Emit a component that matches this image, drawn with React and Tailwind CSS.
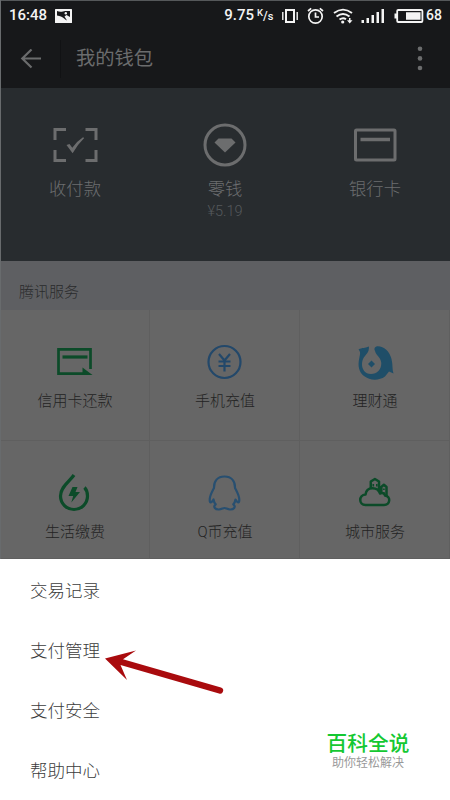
const wallet = [
  { label: "收付款", Icon: ScanIcon },
  { label: "零钱", Icon: ChangeIcon, note: "¥5.19" },
  { label: "银行卡", Icon: BankCardIcon },
];

const services = [
  { label: "信用卡还款", Icon: RepayIcon },
  { label: "手机充值", Icon: YuanIcon },
  { label: "理财通", Icon: FundIcon },
  { label: "生活缴费", Icon: UtilityIcon },
  { label: "Q币充值", Icon: PenguinIcon },
  { label: "城市服务", Icon: CityIcon },
];

const menu = ["交易记录", "支付管理", "支付安全", "帮助中心"];

function ScanIcon() {
  return (
    <svg width="46" height="46" viewBox="0 0 46 46" fill="none" stroke="#6c6d6e" strokeWidth="3">
      <path d="M3 18V7.500H14M33.500 7.500H44V18M44 28V38.500H33.500M14 38.500H3V28" />
      <path d="M14.500 23 17.500 22 20.300 25.800Q25 19 31 15.200L32.200 16Q26 22 20.600 31.200Z" fill="#6c6d6e" stroke="none" />
    </svg>
  );
}

function ChangeIcon() {
  return (
    <svg width="46" height="46" viewBox="0 0 46 46" fill="none">
      <circle cx="23" cy="23" r="20" stroke="#6c6d6e" strokeWidth="3" />
      <path d="M16.500 16.500H29.500L33.500 20.500 23 30.500 12.500 20.500Z" fill="#6c6d6e" />
    </svg>
  );
}

function BankCardIcon() {
  return (
    <svg width="46" height="46" viewBox="0 0 46 46" fill="none" stroke="#6c6d6e" strokeWidth="3">
      <rect x="3.500" y="8" width="39.500" height="30" rx="1" />
      <path d="M8.500 17.500H38" strokeWidth="3.500" />
    </svg>
  );
}

function RepayIcon() {
  return (
    <svg width="40" height="40" viewBox="0 0 40 40" fill="none" stroke="#0c4b29" strokeWidth="2.700">
      <path d="M30 31.600H3.500V7.400H35.500V27" />
      <path d="M7.500 15H32.500" strokeWidth="3.200" />
      <path d="M27.500 25.500 37.500 33H27.500Z" fill="#0c4b29" stroke="none" />
    </svg>
  );
}

function YuanIcon() {
  return (
    <svg width="40" height="40" viewBox="0 0 40 40" fill="none" stroke="#23486a" strokeWidth="2.200">
      <circle cx="19.500" cy="20" r="16" />
      <path d="M14 12 19.500 18.500 25 12M19.500 18.500V29.500M13.500 19.500H25.500M13.500 24H25.500" />
    </svg>
  );
}

function FundIcon() {
  return (
    <svg width="40" height="40" viewBox="0 0 40 40" fill="#1f4e68">
      <path d="M14 4.500C9.500 6.200 7.500 5.500 3.500 7.500 6 10 5 12.500 4.300 16 2.500 24 4 30 9 34 15 38.800 24 38.800 30 34.500L34 29.500 38.500 31.500C37 28 38 23 36.500 17 34.500 9 28.500 3.800 22 4.300 19.500 4.800 18.800 7 20 9 21 13.500 25.800 15 26.300 21 26.500 27.500 22 32 16 32 10 32 6.800 27 7 22 7.300 16.500 9.500 14.500 12 11.500 13.500 9.500 14 7.500 14 4.500Z" />
      <path d="M16.500 18.500 20 22 16.500 25.500 13 22Z" />
    </svg>
  );
}

function UtilityIcon() {
  return (
    <svg width="40" height="40" viewBox="0 0 40 40" fill="none" stroke="#0c4b29" strokeWidth="3.200">
      <path d="M19 2C15 8 5.500 13.500 5.500 23A13.500 13.500 0 0 0 32.500 23C32.500 19.500 31.500 16.500 29.500 14.500" />
      <path d="M17.500 14H22.500L20.500 19H25L16.300 29.500 18.200 23H13.500Z" fill="#0c4b29" stroke="none" />
    </svg>
  );
}

function PenguinIcon() {
  return (
    <svg width="40" height="40" viewBox="0 0 40 40" fill="none" stroke="#284f70" strokeWidth="2.200" strokeLinejoin="round">
      <path d="M19.500 3.500C12.500 3.500 8.800 8 9 15 7 19 3.500 24 5 29 6 30.500 7.500 28 8.500 26.500 8.800 29 9.500 30 10.700 31.300 7.500 34 10.500 36.700 14 36.500 16.500 36.500 18 35 19.500 35S22.500 36.500 25 36.500C28.500 36.700 31.500 34 28.300 31.300 29.500 30 30.200 29 30.500 26.500 31.500 28 33 30.500 34 29 35.500 24 32 19 30 15 30.200 8 26.500 3.500 19.500 3.500Z" />
    </svg>
  );
}

function CityIcon() {
  return (
    <svg width="40" height="40" viewBox="0 0 40 40" fill="none" stroke="#0c4b29" strokeWidth="2.500" strokeLinejoin="round">
      <path d="M10.500 32C3.500 32 3.500 22 10.500 21.500 11.500 13 23 13.500 25 20.500 27.500 19.500 29.500 20.500 30 22.500 36.500 23.500 35 32 29 32Z" />
      <path d="M15.800 15V8.500L19.900 6 24 8.500V18.500M26.300 19.500V14L28.900 11.800 31.500 14V22.500" />
      <path d="M18.300 11V13.500M21.800 11V13.500M28.900 15.500V17M28.900 19V20.500" strokeWidth="1.600" />
    </svg>
  );
}

function StatusBar() {
  return (
    <div className="flex h-[29px] items-center pl-[9px] pr-[8px] font-['Roboto',sans-serif] text-base font-medium text-[#f4f4f4]">
      <span className="w-[46px] text-[15px]">16:48</span>
      <svg className="h-[14px] w-[17px]" viewBox="0 0 17 14">
        <rect width="17" height="14" rx="0.500" fill="#f4f4f4" />
        <path d="M2 2C5 3.500 8 2.500 10 2H15V8L11.500 6 9.500 7.500 12 11.500C9.500 10.500 8.500 7.500 2 6.500Z" fill="#17181a" />
        <circle cx="10.800" cy="4.300" r="1.200" fill="#f4f4f4" />
      </svg>
      <span className="ml-auto text-[15px]">9.75</span>
      <span className="ml-[3px] w-[16px] whitespace-nowrap text-[12px]">
        <sup className="-top-[4px] text-[9.500px]">K</sup>/<sub className="bottom-0 text-[11px]">s</sub>
      </span>
      <svg className="ml-[9px] h-[16px] w-[16px]" viewBox="0 0 16 16" fill="none" stroke="#f4f4f4">
        <rect x="4" y="2" width="8" height="12" strokeWidth="2" />
        <path d="M.8 4V12M15.200 4V12" strokeWidth="1.400" />
      </svg>
      <svg className="ml-[9px] h-[18px] w-[17px]" viewBox="0 0 17 18" fill="none" stroke="#f4f4f4" strokeWidth="1.700">
        <circle cx="8.500" cy="9.500" r="6.700" />
        <path d="M8.500 5.500V10H12M1 4 4.200 1.300M16 4 12.800 1.300" />
      </svg>
      <svg className="ml-[9px] h-[16px] w-[20px]" viewBox="0 0 20 16" fill="none" stroke="#f4f4f4" strokeWidth="1.900">
        <path d="M1 5Q10-1.800 19 5M3.500 8.500Q10 3.500 16.500 8.500M6.500 11.500Q10 9 13 11.200" />
        <circle cx="9.700" cy="14" r="1.600" fill="#f4f4f4" stroke="none" />
        <path d="M14 12.300H19.500L16.700 15.500ZM16 10H17.500V13H16Z" fill="#f4f4f4" stroke="none" />
      </svg>
      <svg className="ml-[8px] h-[15px] w-[24px]" viewBox="0 0 24 15" fill="#f4f4f4">
        <path d="M.5 12H3V15H.5ZM5.500 10H8V15H5.500ZM10.500 7H13V15H10.500ZM15.500 4H18V15H15.500ZM20.500 1H23V15H20.500Z" />
      </svg>
      <svg className="ml-[9px] h-[14px] w-[30px]" viewBox="0 0 30 14">
        <rect x="3.200" y="1" width="25.200" height="12" rx="1" fill="none" stroke="#f4f4f4" strokeWidth="1.800" />
        <path d="M.5 4.500H3V9.500H.5ZM12 3.200H26.500V10.800H12Z" fill="#f4f4f4" />
      </svg>
      <span className="ml-[2px] text-[14px]">68</span>
    </div>
  );
}

export default function App() {
  return (
    <div className="relative flex h-[800px] w-[450px] flex-col overflow-hidden bg-white font-['Roboto','Noto_Sans_CJK_SC',sans-serif]">
      <header className="h-[88px] border-t border-[#55585a] bg-[#17181a]">
        <StatusBar />
        <div className="flex h-[58px] items-center pl-[20px] pr-[26px] text-[#6b6c6d]">
          <svg width="22" height="20" viewBox="0 0 22 20" fill="none" stroke="currentColor" strokeWidth="2.200">
            <path d="M11.500 .5 2.300 9.500 11.500 18.500M2.300 9.500H21" />
          </svg>
          <span className="ml-[18px] h-[38px] w-px bg-[#111214]" />
          <h1 className="ml-[15px] text-[19.300px] leading-none">我的钱包</h1>
          <svg className="ml-auto" width="8" height="26" viewBox="0 0 8 26" fill="currentColor">
            <circle cx="4" cy="2.800" r="2.300" />
            <circle cx="4" cy="12.400" r="2.300" />
            <circle cx="4" cy="22" r="2.300" />
          </svg>
        </div>
      </header>

      <section className="grid h-[173px] grid-cols-3 bg-[#282c2f] pt-[34px]">
        {wallet.map(({ label, Icon, note }) => (
          <div key={label} className="flex flex-col items-center text-[#6c6e70]">
            <Icon />
            <span className="mt-[10px] text-[17.300px] font-light leading-[22px]">{label}</span>
            {note && <span className="mt-[3px] text-[14.500px] font-light leading-[17px] text-[#55595c]">{note}</span>}
          </div>
        ))}
      </section>

      <h2 className="flex h-[49px] items-center bg-[#5e5f62] pl-[19px] pt-[13px] text-[15px] font-light text-[#2a2b2c]">
        腾讯服务
      </h2>

      <section className="grid h-[249px] grid-cols-3 grid-rows-[131px_118px] overflow-hidden bg-[#666]">
        {services.map(({ label, Icon }) => (
          <div
            key={label}
            className="flex flex-col items-center border-b border-r border-[#5f5f5f] pl-px pt-[32px] text-[#232323]"
          >
            <Icon />
            <span className="mt-[9px] text-[15px] font-light leading-[20px]">{label}</span>
          </div>
        ))}
      </section>

      <nav className="flex h-[241px] flex-col pl-[30px] pt-[2px]">
        {menu.map((item) => (
          <button key={item} className="h-[60px] shrink-0 text-left text-[17.500px] font-light text-[#3c3c3c]">
            {item}
          </button>
        ))}
      </nav>

      {/* window edge */}
      <div className="absolute left-0 top-0 h-[559px] w-px bg-[#686b6d]" />

      {/* pointer to 支付管理 */}
      <svg className="absolute left-[100px] top-[645px]" width="128" height="54" viewBox="0 0 128 54">
        <path d="M5 13.500 36 5.500 23 14.200 121 42.500A3 3 0 0 1 119 48.500L20.500 20 27 35Z" fill="#a90b0e" />
      </svg>

      <div className="absolute left-[326px] top-[732px] flex w-[84px] flex-col items-center whitespace-nowrap">
        <strong className="text-[20.700px] font-medium leading-[24px] text-[#14c832]">百科全说</strong>
        <span className="text-[12px] leading-[14px] text-[#999]">助你轻松解决</span>
      </div>
    </div>
  );
}
